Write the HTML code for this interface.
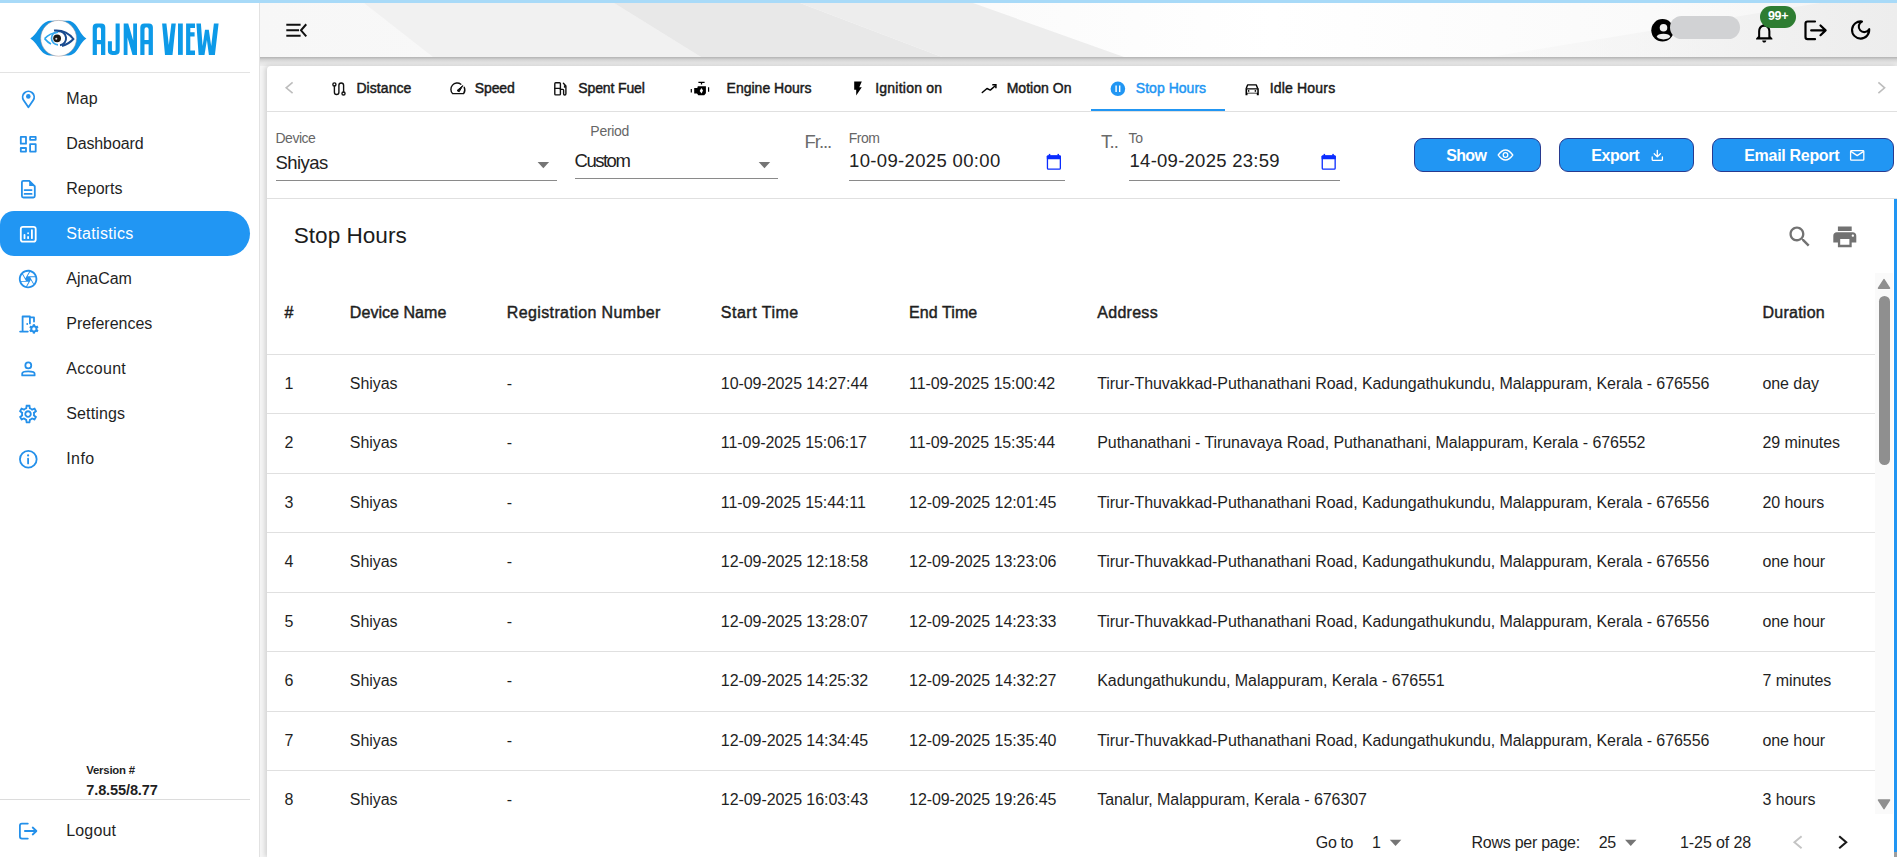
<!DOCTYPE html>
<html><head><meta charset="utf-8">
<style>
*{box-sizing:border-box;margin:0;padding:0}
html,body{width:1897px;height:857px;overflow:hidden;background:#fff;font-family:"Liberation Sans",sans-serif;color:#1f1f1f}
.a{position:absolute}
.t{position:absolute;white-space:pre}
svg{position:absolute;overflow:visible}
</style></head>
<body>
<!-- sidebar -->
<div class="a" style="left:259px;top:0;width:1px;height:857px;background:#e2e2e2"></div>
<svg style="left:0;top:0" width="240" height="70" viewBox="0 0 240 70">
  <path d="M30.3 38.6 C38 34 40 22 50 20.8 L68.6 20.8 C78 22 79 34 86.4 38.6 C79 43 78 55 68.6 55.6 L50 55.6 C40 55 38 43 30.3 38.6Z" fill="#0f93e4"/>
  <circle cx="58.6" cy="38.3" r="17.9" fill="#fff" stroke="#a89090" stroke-width="0.5"/>
  <path d="M44.6 38.6 Q50 33 58 32.3" fill="none" stroke="#2aa5ee" stroke-width="1.6"/>
  <path d="M44.6 38.6 Q48 42.5 51 44" fill="none" stroke="#2aa5ee" stroke-width="1.6"/>
  <path d="M58 31.8 A6.5 6.5 0 0 0 58 44.8" fill="none" stroke="#38a8ee" stroke-width="1.7"/>
  <path d="M54 30.6 Q66 29.5 73.4 39 Q69 44 62 46" fill="none" stroke="#1a4b8f" stroke-width="2"/>
  <path d="M58 31.3 A7 7 0 0 1 60 45.3" fill="none" stroke="#1a4b8f" stroke-width="2"/>
  <circle cx="57.1" cy="38.3" r="3.9" fill="#1a1a1a"/>
  <circle cx="56.3" cy="38.8" r="1" fill="#ddd"/>
  <g fill="#0d9ae8" fill-rule="evenodd">
    <path d="M92.7 54.9 V27.5 Q92.7 23.5 96.7 23.5 H101.3 Q105.3 23.5 105.3 27.5 V54.9 H101 V44.2 H96.9 V54.9 Z M96.9 40.1 V29.3 Q96.9 27.3 98.9 27.3 Q101 27.3 101 29.3 V40.1 Z"/>
    <path d="M115.6 23.5 H119.7 V50.5 Q119.7 54.9 115.3 54.9 H112.3 Q107.9 54.9 107.9 50.5 V41.2 H111.9 V49.5 Q111.9 51 113 51 H114.5 Q115.6 51 115.6 49.5 Z"/>
    <path d="M123.7 54.9 V23.5 H128.2 L133.2 40.5 V23.5 H137 V54.9 H132.5 L127.5 37.5 V54.9 Z"/>
    <path d="M140.3 54.9 V27.5 Q140.3 23.5 144.3 23.5 H148.9 Q152.9 23.5 152.9 27.5 V54.9 H148.6 V44.2 H144.5 V54.9 Z M144.5 40.1 V29.3 Q144.5 27.3 146.5 27.3 Q148.6 27.3 148.6 29.3 V40.1 Z"/>
    <path d="M162.1 23.5 H166.4 L168.8 45 L171.4 23.5 H175.8 L172.5 54.9 H165 Z"/>
    <path d="M178 23.5 H182.8 V54.9 H178 Z"/>
    <path d="M186.1 23.5 H195 V27.9 H190.3 V32.3 H194.6 V36.4 H190.3 V50.5 H195 V54.9 H186.1 Z"/>
    <path d="M196.4 23.5 H200.9 L202.6 46 L205 29.8 H208.8 L211.2 46 L213.9 23.5 H218.6 L214.9 54.9 H208.9 L206.9 40 L204.5 54.9 H198.6 Z"/>
  </g>
</svg>
<div class="a" style="left:0;top:72px;width:250px;height:1px;background:#e3e3e3"></div>
<div class="a" style="left:0;top:211px;width:250px;height:45px;background:#2196f3;border-radius:14px 22.5px 22.5px 14px"></div>
<svg style="left:14px;top:86px" width="30" height="26" viewBox="14 86 30 26" ><path d="M28.4 107.2 L23.6 100.2 A5.75 5.75 0 1 1 33.2 100.2 Z" fill="none" stroke="#2490ea" stroke-width="1.8" stroke-linecap="round" stroke-linejoin="round"/><circle cx="28.3" cy="96.4" r="2.3" fill="#2490ea"/></svg>
<svg style="left:14px;top:131px" width="30" height="26" viewBox="14 131 30 26" ><g fill="none" stroke="#2490ea" stroke-width="1.8" stroke-linecap="round" stroke-linejoin="round" stroke-linecap="butt" stroke-linejoin="miter"><rect x="20.8" y="136.9" width="5.2" height="6.8"/><rect x="30.1" y="136.9" width="5.6" height="2.9"/><rect x="20.8" y="148" width="5.2" height="3.6"/><rect x="30.1" y="144.2" width="5.6" height="7.4"/></g></svg>
<svg style="left:14px;top:176px" width="30" height="26" viewBox="14 176 30 26" ><path d="M29.2 180.8 H23.4 Q21.9 180.8 21.9 182.3 V196 Q21.9 197.5 23.4 197.5 H33.3 Q34.8 197.5 34.8 196 V186.4 Z" fill="none" stroke="#2490ea" stroke-width="1.8" stroke-linecap="round" stroke-linejoin="round"/><path d="M29.2 180 V186 H35.5 Z" fill="#2490ea"/><path d="M24.6 190.1 H31.6 M24.6 193.9 H31.6" fill="none" stroke="#2490ea" stroke-width="1.8" stroke-linecap="round" stroke-linejoin="round" stroke-width="1.7"/></svg>
<svg style="left:14px;top:221px" width="30" height="26" viewBox="14 221 30 26" ><rect x="20.8" y="226.8" width="14.9" height="14.8" rx="2.2" fill="none" stroke="#fff" stroke-width="1.8" stroke-linecap="round" stroke-linejoin="round"/><path d="M24.5 234.8 V238.2 M28.1 237 V238.2 M28.1 233.2 V233.3 M31.9 230.2 V238.2" fill="none" stroke="#fff" stroke-width="1.8" stroke-linecap="round" stroke-linejoin="round" stroke-width="1.7" stroke-linecap="square"/></svg>
<svg style="left:17.20px;top:268.10px" width="22.20" height="22.20" viewBox="0 0 24 24" fill="#2490ea"><path d="M14.25 2.26l-.08-.04-.01.02C13.46 2.09 12.74 2 12 2 6.48 2 2 6.48 2 12s4.48 10 10 10 10-4.48 10-10c0-4.75-3.31-8.72-7.750-9.74zM19.41 9h-7.99l2.71-4.7c2.4.66 4.35 2.42 5.28 4.7zM13.1 4.08L10.27 9l-1.15 2L6.4 6.3C7.84 4.88 9.82 4 12 4c.37 0 .74.03 1.1.08zM5.7 7.09L8.54 12l1.15 2H4.26C4.1 13.36 4 12.69 4 12c0-1.85.64-3.55 1.7-4.91zM4.59 15h7.98l-2.71 4.7c-2.4-.67-4.34-2.42-5.27-4.7zm6.31 4.91L14.89 13l2.72 4.7C16.16 19.12 14.18 20 12 20c-.38 0-.74-.04-1.1-.09zm7.4-3l-4-6.91h5.43c.17.64.27 1.31.27 2 0 1.85-.64 3.55-1.7 4.91z"/></svg>
<svg style="left:14px;top:311px" width="30" height="26" viewBox="14 311 30 26" ><path d="M20.1 331.6 H27.8 M22.6 331.6 V316.5 H29.9 V323.4 M29.9 317.4 H34 V321.5" fill="none" stroke="#2490ea" stroke-width="1.8" stroke-linecap="round" stroke-linejoin="round" stroke-width="1.7" stroke-linecap="round"/><circle cx="27.2" cy="324" r="0.9" fill="#2490ea"/><rect x="32.80" y="324.20" width="2.2" height="2.4" transform="rotate(0 33.9 328.9)" fill="#2490ea"/><rect x="32.80" y="324.20" width="2.2" height="2.4" transform="rotate(60 33.9 328.9)" fill="#2490ea"/><rect x="32.80" y="324.20" width="2.2" height="2.4" transform="rotate(120 33.9 328.9)" fill="#2490ea"/><rect x="32.80" y="324.20" width="2.2" height="2.4" transform="rotate(180 33.9 328.9)" fill="#2490ea"/><rect x="32.80" y="324.20" width="2.2" height="2.4" transform="rotate(240 33.9 328.9)" fill="#2490ea"/><rect x="32.80" y="324.20" width="2.2" height="2.4" transform="rotate(300 33.9 328.9)" fill="#2490ea"/><circle cx="33.9" cy="328.9" r="2.6" fill="none" stroke="#2490ea" stroke-width="1.9"/></svg>
<svg style="left:14px;top:356px" width="30" height="26" viewBox="14 356 30 26" ><circle cx="28.3" cy="365.4" r="2.95" fill="none" stroke="#2490ea" stroke-width="1.8" stroke-linecap="round" stroke-linejoin="round" stroke-width="1.7"/><path d="M22.2 375.4 V373.6 Q22.2 371.4 28.3 371.4 Q34.6 371.4 34.6 373.8 V375.4 Z" fill="none" stroke="#2490ea" stroke-width="1.8" stroke-linecap="round" stroke-linejoin="round" stroke-width="1.7"/></svg>
<svg style="left:17.26px;top:403.20px" width="22.10" height="22.10" viewBox="0 0 24 24" fill="#2490ea"><path d="M19.43 12.98c.04-.32.07-.64.07-.98 0-.34-.03-.66-.07-.98l2.11-1.65c.19-.15.24-.42.12-.64l-2-3.46c-.09-.16-.26-.25-.44-.25-.06 0-.12.01-.17.03l-2.49 1c-.52-.4-1.08-.73-1.69-.98l-.38-2.65C14.460 2.18 14.25 2 14 2h-4c-.25 0-.46.18-.49.42l-.38 2.65c-.61.25-1.17.59-1.69.98l-2.49-1c-.06-.02-.12-.03-.18-.03-.17 0-.34.09-.43.25l-2 3.46c-.13.22-.07.49.12.64l2.11 1.65c-.04.32-.07.65-.07.98 0 .33.03.66.07.98l-2.11 1.65c-.19.15-.24.42-.12.64l2 3.46c.09.16.26.25.44.25.06 0 .12-.01.17-.03l2.49-1c.52.4 1.08.73 1.69.98l.38 2.65c.03.24.24.42.49.42h4c.25 0 .46-.18.49-.42l.38-2.65c.61-.25 1.17-.59 1.69-.98l2.49 1c.06.02.12.03.18.03.17 0 .34-.09.43-.25l2-3.46c.12-.22.07-.49-.12-.64l-2.11-1.65zm-1.98-1.71c.04.31.05.52.05.73 0 .21-.02.43-.05.73l-.14 1.13.89.7 1.08.84-.7 1.21-1.27-.51-1.04-.42-.9.68c-.43.32-.84.56-1.25.73l-1.06.43-.16 1.13-.2 1.35h-1.4l-.19-1.35-.16-1.13-1.06-.43c-.43-.18-.83-.41-1.23-.71l-.91-.7-1.06.43-1.27.51-.7-1.21 1.08-.84.89-.7-.14-1.13c-.03-.31-.05-.54-.05-.74s.02-.43.05-.73l.14-1.13-.89-.7-1.08-.84.7-1.21 1.27.51 1.04.42.9-.68c.43-.32.84-.56 1.25-.73l1.06-.43.16-1.13.2-1.35h1.39l.19 1.35.16 1.13 1.06.43c.43.18.83.41 1.23.71l.91.7 1.06-.43 1.27-.51.7 1.21-1.07.85-.89.7.14 1.13zM12 8c-2.21 0-4 1.79-4 4s1.79 4 4 4 4-1.79 4-4-1.79-4-4-4zm0 6c-1.1 0-2-.9-2-2s.9-2 2-2 2 .9 2 2-.9 2-2 2z"/></svg>
<svg style="left:14px;top:446px" width="30" height="26" viewBox="14 446 30 26" ><circle cx="28.3" cy="459.2" r="8.35" fill="none" stroke="#2490ea" stroke-width="1.8" stroke-linecap="round" stroke-linejoin="round"/><circle cx="28.1" cy="455.4" r="1.1" fill="#2490ea"/><path d="M28.1 458.6 V463.4" fill="none" stroke="#2490ea" stroke-width="1.8" stroke-linecap="round" stroke-linejoin="round" stroke-width="2" stroke-linecap="butt"/></svg>
<svg style="left:14px;top:818px" width="30" height="26" viewBox="14 818 30 26" ><path d="M27.8 823.6 H21.9 Q19.9 823.6 19.9 825.6 V836.6 Q19.9 838.6 21.9 838.6 H27.8" fill="none" stroke="#2490ea" stroke-width="1.8" stroke-linecap="round" stroke-linejoin="round"/><path d="M24.9 831 H36.3 M32.7 827.5 L36.4 831 L32.7 834.5" fill="none" stroke="#2490ea" stroke-width="1.8" stroke-linecap="round" stroke-linejoin="round"/></svg>
<div class="a" style="left:0;top:799px;width:250px;height:1px;background:#dcdcdc"></div>

<!-- main bg -->
<div class="a" style="left:260px;top:3px;width:1637px;height:854px;background:#f5f5f5"></div>
<!-- header -->
<svg style="left:260px;top:3px" width="1637" height="54" viewBox="0 0 1637 54">
  <defs>
    <linearGradient id="hb" x1="0" y1="0" x2="1" y2="0"><stop offset="0" stop-color="#f7f7f7"/><stop offset="0.45" stop-color="#fbfbfb"/><stop offset="0.62" stop-color="#ffffff"/><stop offset="0.85" stop-color="#fafafa"/><stop offset="1" stop-color="#f3f3f3"/></linearGradient>
    <linearGradient id="hr" x1="0" y1="0" x2="1" y2="0"><stop offset="0" stop-color="#f3f3f3" stop-opacity="0.3"/><stop offset="1" stop-color="#ededed"/></linearGradient>
  </defs>
  <rect x="0" y="0" width="1637" height="54" fill="url(#hb)"/>
  <polygon points="104,0 354,0 441,54 173,54" fill="#f1f1f1"/>
  <polygon points="354,0 540,0 682,54 441,54" fill="#e8e8e8"/>
  <polygon points="540,0 713,0 864,54 682,54" fill="#ededed"/>
  <polygon points="1230,54 1560,0 1637,0 1637,54" fill="url(#hr)"/>
</svg>
<div class="a" style="left:260px;top:57px;width:1637px;height:9px;background:linear-gradient(#b3b3b3,#d4d4d4 30%,#e6e6e6 65%,#ececec)"></div>
<div class="a" style="left:0;top:0;width:1897px;height:3px;background:#a8daf8"></div>
<svg style="left:280px;top:18px" width="32" height="24" viewBox="280 18 32 24" ><g fill="none" stroke="#111" stroke-width="2.1"><path d="M286.3 24.8 H300.6 M286.3 30.3 H299 M286.3 35.8 H300.6"/><path d="M305.6 25 L301 30.3 L305.6 35.6" stroke-linecap="square" stroke-width="2"/></g></svg>
<svg style="left:1645px;top:12px" width="35" height="35" viewBox="1645 12 35 35" ><circle cx="1662.5" cy="30.3" r="11.2" fill="#000"/><circle cx="1663.5" cy="27.7" r="3.8" fill="#eee"/><ellipse cx="1663.5" cy="36.6" rx="6.6" ry="2.8" fill="#eee"/></svg>
<div class="a" style="left:1670px;top:16px;width:70px;height:23px;border-radius:11.5px;background:#d1d2d4"></div>
<svg style="left:1752.40px;top:20.30px" width="24.50" height="24.50" viewBox="0 0 24 24" fill="#000"><path d="M12 22c1.1 0 2-.9 2-2h-4c0 1.1.89 2 2 2zm6-6v-5c0-3.07-1.64-5.64-4.5-6.32V4c0-.83-.67-1.5-1.5-1.5s-1.5.67-1.5 1.5v.68C7.63 5.36 6 7.92 6 11v5l-2 2v1h16v-1l-2-2zm-2 1H8v-6c0-2.48 1.51-4.5 4-4.5s4 2.02 4 4.5v6z"/></svg>
<div class="a" style="left:1760px;top:5.6px;width:36.2px;height:22.4px;border-radius:11.2px;background:#2e7d32"></div>
<div class="t" style="left:1760px;top:9px;width:36.2px;text-align:center;font-size:12.5px;line-height:14px;font-weight:700;color:#fff;letter-spacing:-0.3px">99+</div>
<svg style="left:1800px;top:15px" width="30" height="30" viewBox="1800 15 30 30" ><g fill="none" stroke="#000" stroke-width="2.2" stroke-linecap="round" stroke-linejoin="round"><path d="M1815 21.5 H1807.6 Q1805.5 21.5 1805.5 23.6 V37.1 Q1805.5 39.2 1807.6 39.2 H1815"/><path d="M1811.2 30.4 H1825.6 M1820.5 25.5 L1825.6 30.4 L1820.5 35.2"/></g></svg>
<svg style="left:1845px;top:15px" width="30" height="30" viewBox="1845 15 30 30" ><path d="M1862 21.5 A5.56 5.56 0 1 0 1869.2 29.2 A8.6 8.6 0 1 1 1862 21.5 Z" fill="none" stroke="#000" stroke-width="2.1" stroke-linejoin="round"/></svg>

<!-- card -->
<div class="a" style="left:267px;top:66px;width:1630px;height:791px;background:#fff;border-radius:4px 0 0 0;box-shadow:-2px 0 5px rgba(0,0,0,.15)"></div>
<div class="a" style="left:267px;top:111px;width:1630px;height:1px;background:#e0e0e0"></div>
<div class="a" style="left:1091px;top:109px;width:134px;height:2px;background:#2196f3"></div>
<div class="a" style="left:267px;top:198px;width:1630px;height:1px;background:#e0e0e0"></div>
<!-- underlines -->
<div class="a" style="left:276px;top:180px;width:281px;height:1px;background:#8a8a8a"></div>
<div class="a" style="left:575px;top:178px;width:203px;height:1px;background:#8a8a8a"></div>
<div class="a" style="left:849px;top:180px;width:216px;height:1px;background:#8a8a8a"></div>
<div class="a" style="left:1129px;top:180px;width:211px;height:1px;background:#8a8a8a"></div>
<!-- buttons -->
<div class="a" style="left:1414px;top:138px;width:127px;height:34px;background:#2196f3;border:1px solid #283a8f;border-radius:9px"></div>
<div class="a" style="left:1559px;top:138px;width:135px;height:34px;background:#2196f3;border:1px solid #283a8f;border-radius:9px"></div>
<div class="a" style="left:1712px;top:138px;width:182px;height:34px;background:#2196f3;border:1px solid #283a8f;border-radius:9px"></div>
<!-- right blue strip -->
<div class="a" style="left:1894px;top:199px;width:3px;height:653px;background:#2196f3"></div>
<div class="a" style="left:1894px;top:852px;width:3px;height:5px;background:#9e9e9e"></div>
<!-- table lines -->
<div class="a" style="left:267px;top:354px;width:1608px;height:1px;background:#e0e0e0"></div>
<div class="a" style="left:267px;top:413px;width:1608px;height:1px;background:#e0e0e0"></div>
<div class="a" style="left:267px;top:473px;width:1608px;height:1px;background:#e0e0e0"></div>
<div class="a" style="left:267px;top:532px;width:1608px;height:1px;background:#e0e0e0"></div>
<div class="a" style="left:267px;top:592px;width:1608px;height:1px;background:#e0e0e0"></div>
<div class="a" style="left:267px;top:651px;width:1608px;height:1px;background:#e0e0e0"></div>
<div class="a" style="left:267px;top:711px;width:1608px;height:1px;background:#e0e0e0"></div>
<div class="a" style="left:267px;top:770px;width:1608px;height:1px;background:#e0e0e0"></div>
<!-- scrollbar -->
<div class="a" style="left:1875px;top:273px;width:18px;height:541px;background:#fafafa"></div>
<div class="a" style="left:1879px;top:296px;width:11px;height:169px;background:#8f8f8f;border-radius:6px"></div>
<svg style="left:1875px;top:273px" width="18" height="20" viewBox="0 0 18 20"><path d="M3.5 15.2 L9 6.6 L14.5 15.2Z" fill="#8f8f8f" stroke="#8f8f8f" stroke-width="1.5" stroke-linejoin="round"/></svg>
<svg style="left:1875px;top:792px" width="18" height="20" viewBox="0 0 18 20"><path d="M3.5 8 L9 16.6 L14.5 8Z" fill="#8f8f8f" stroke="#8f8f8f" stroke-width="1.5" stroke-linejoin="round"/></svg>
<svg style="left:280px;top:78px" width="20" height="20" viewBox="280 78 20 20" ><path d="M292.6 82.4 L286.2 87.8 L292.6 93.2" fill="none" stroke="#bdbdbd" stroke-width="1.6"/></svg>
<svg style="left:1870px;top:78px" width="20" height="20" viewBox="1870 78 20 20" ><path d="M1878.4 82.4 L1884.6 87.8 L1878.4 93.2" fill="none" stroke="#bdbdbd" stroke-width="1.6"/></svg>
<svg style="left:326px;top:76px" width="30" height="24" viewBox="326 76 30 24" ><circle cx="334.4" cy="84.4" r="1.55" fill="none" stroke="#111" stroke-width="1.4" stroke-linecap="round" stroke-linejoin="round"/><path d="M334.4 86 V92.3 Q334.4 94.5 336.6 94.5 Q338.9 94.5 338.9 92.3 V85.3 Q338.9 83 341.2 83 Q343.6 83 343.6 85.3 V91.9" fill="none" stroke="#111" stroke-width="1.4" stroke-linecap="round" stroke-linejoin="round"/><circle cx="343.5" cy="93.5" r="1.55" fill="none" stroke="#111" stroke-width="1.4" stroke-linecap="round" stroke-linejoin="round"/></svg>
<svg style="left:445px;top:76px" width="30" height="24" viewBox="445 76 30 24" ><path d="M460.9 84.2 A6.3 6.3 0 0 0 452.6 93.6 L463.6 93.6 A6.3 6.3 0 0 0 464.2 87.2" fill="none" stroke="#111" stroke-width="1.4" stroke-linecap="round" stroke-linejoin="round" stroke-width="1.5"/><path d="M457 90.6 L462.8 85.6 L459.2 91.8 Z" fill="#111" stroke="#111" stroke-width="1" stroke-linejoin="round"/></svg>
<svg style="left:546px;top:76px" width="30" height="24" viewBox="546 76 30 24" ><rect x="554.8" y="82.75" width="5.6" height="12.15" rx="0.9" fill="none" stroke="#111" stroke-width="1.4" stroke-linecap="round" stroke-linejoin="round" stroke-width="1.45"/><path d="M554.8 88.35 H560.4" fill="none" stroke="#111" stroke-width="1.4" stroke-linecap="round" stroke-linejoin="round" stroke-width="1.2"/><path d="M560.4 89.4 H562.9 Q563.6 89.4 563.6 90.2 V93.8 Q563.6 95 564.7 95 Q565.9 95 565.9 93.8 V86 L563.4 83.3" fill="none" stroke="#111" stroke-width="1.4" stroke-linecap="round" stroke-linejoin="round" stroke-width="1.25"/><rect x="563.9" y="85.3" width="1.8" height="2.4" fill="#111"/></svg>
<svg style="left:685px;top:76px" width="30" height="24" viewBox="685 76 30 24" ><path d="M698.4 82.4 H704.6 M701.5 82.4 V84.6" stroke="#000" stroke-width="1.3" fill="none"/><path d="M694.2 88 H697.3 L697.8 86.2 H705.9 V93.3 L704.2 95.3 H698.3 L697 93.6 H694.2 Z" fill="#000"/><path d="M691.3 88.9 V92.5 M708.6 87.2 V91.7" stroke="#000" stroke-width="1.2" fill="none"/><path d="M701.4 88 L703 90.6 L701.6 93.6 L699.7 91.1 Z" fill="#fff"/></svg>
<svg style="left:845px;top:76px" width="30" height="24" viewBox="845 76 30 24" ><path d="M854.2 81.5 H861.8 L859.3 87.2 H861.8 L856.2 95.6 V89.7 H854.2 Z" fill="#000"/></svg>
<svg style="left:975px;top:76px" width="30" height="24" viewBox="975 76 30 24" ><path d="M982.3 92.5 L987 88.5 L990.3 90.1 L995 86" fill="none" stroke="#000" stroke-width="1.5" stroke-linecap="round" stroke-linejoin="round"/><path d="M992.3 84.7 H995.9 V88.3" fill="none" stroke="#000" stroke-width="1.5" stroke-linecap="butt"/></svg>
<svg style="left:1105px;top:76px" width="30" height="24" viewBox="1105 76 30 24" ><circle cx="1117.9" cy="88.8" r="7.3" fill="#2196f3"/><path d="M1116.1 85.6 V92 M1119.7 85.6 V92" stroke="#fff" stroke-width="1.4"/></svg>
<svg style="left:1240px;top:76px" width="30" height="24" viewBox="1240 76 30 24" ><path d="M1246.2 88.6 L1247.6 84.9 H1256.3 L1257.7 88.6" fill="none" stroke="#000" stroke-width="1.4" stroke-linejoin="round"/><path d="M1245.5 88.2 H1258.8 V95.3 H1256.8 V93.6 H1247.5 V95.3 H1245.5 Z M1247 89.4 V92.8 H1257.3 V89.4 Z" fill="#000" fill-rule="evenodd"/><circle cx="1248.6" cy="90.9" r="0.85" fill="#000"/><circle cx="1255.4" cy="90.9" r="0.85" fill="#000"/></svg>
<svg style="left:535px;top:159px" width="18" height="12" viewBox="535 159 18 12" ><path d="M537.6 162 H549.1 L543.35 168.2 Z" fill="#757575"/></svg>
<svg style="left:756px;top:159px" width="18" height="12" viewBox="756 159 18 12" ><path d="M758.7 162 H770.2 L764.45 168.2 Z" fill="#757575"/></svg>
<svg style="left:1387px;top:836px" width="18" height="12" viewBox="1387 836 18 12" ><path d="M1389.8 839.8 H1401.3 L1395.55 846.0 Z" fill="#757575"/></svg>
<svg style="left:1623px;top:836px" width="18" height="12" viewBox="1623 836 18 12" ><path d="M1625 839.8 H1636.5 L1630.75 846.0 Z" fill="#757575"/></svg>
<svg style="left:1044px;top:150px" width="20" height="22" viewBox="1044 150 20 22" ><rect x="1047.45" y="156.0" width="12.9" height="13.1" rx="0.9" fill="none" stroke="#0a2cff" stroke-width="1.3"/><rect x="1046.8" y="155.4" width="14.2" height="3.9" rx="0.9" fill="#0a2cff"/><rect x="1048.8" y="153.9" width="1.5" height="2" fill="#0a2cff"/><rect x="1057.5" y="153.9" width="1.5" height="2" fill="#0a2cff"/></svg>
<svg style="left:1319px;top:150px" width="20" height="22" viewBox="1319 150 20 22" ><rect x="1322.25" y="156.0" width="12.9" height="13.1" rx="0.9" fill="none" stroke="#0a2cff" stroke-width="1.3"/><rect x="1321.6" y="155.4" width="14.2" height="3.9" rx="0.9" fill="#0a2cff"/><rect x="1323.6" y="153.9" width="1.5" height="2" fill="#0a2cff"/><rect x="1332.3" y="153.9" width="1.5" height="2" fill="#0a2cff"/></svg>
<svg style="left:1494px;top:146px" width="24" height="18" viewBox="1494 146 24 18" ><path d="M1498.2 155 Q1505.5 145 1512.8 155 Q1505.5 165 1498.2 155 Z" fill="none" stroke="#fff" stroke-width="1.3" stroke-linejoin="round"/><circle cx="1505.5" cy="155" r="2.3" fill="none" stroke="#fff" stroke-width="1.3"/></svg>
<svg style="left:1648px;top:146px" width="20" height="18" viewBox="1648 146 20 18" ><path d="M1652.2 157 V159.4 Q1652.2 160.4 1653.2 160.4 H1661.4 Q1662.4 160.4 1662.4 159.4 V157 M1654.2 153.8 L1657.3 156.9 L1660.4 153.8 M1657.3 150.3 V156.9" fill="none" stroke="#fff" stroke-width="1.3" stroke-linecap="round" stroke-linejoin="round"/></svg>
<svg style="left:1846px;top:146px" width="22" height="18" viewBox="1846 146 22 18" ><rect x="1850.6" y="150.7" width="13.2" height="9.5" rx="0.8" fill="none" stroke="#fff" stroke-width="1.3"/><path d="M1850.8 151.4 L1857.2 155.6 L1863.6 151.4" fill="none" stroke="#fff" stroke-width="1.3" stroke-linejoin="round"/></svg>
<svg style="left:1785.50px;top:223.05px" width="27.60" height="27.60" viewBox="0 0 24 24" fill="#727272"><path d="M15.5 14h-.79l-.28-.27C15.41 12.59 16 11.11 16 9.5 16 5.91 13.09 3 9.5 3S3 5.91 3 9.5 5.91 16 9.5 16c1.61 0 3.090-.59 4.23-1.57l.27.28v.79l5 4.99L20.49 19l-4.99-5zm-6 0C7.01 14 5 11.99 5 9.5S7.01 5 9.5 5 14 7.01 14 9.5 11.99 14 9.5 14z"/></svg>
<svg style="left:1830.90px;top:222.50px" width="27.60" height="27.60" viewBox="0 0 24 24" fill="#727272"><path d="M19 8H5c-1.66 0-3 1.34-3 3v6h4v4h12v-4h4v-6c0-1.66-1.34-3-3-3zm-3 11H8v-5h8v5zm3-7c-.55 0-1-.45-1-1s.45-1 1-1 1 .45 1 1-.45 1-1 1zm-1-9H6v4h12V3z"/></svg>
<svg style="left:1788px;top:832px" width="20" height="20" viewBox="1788 832 20 20" ><path d="M1801.6 836.2 L1794.4 842.2 L1801.6 848.2" fill="none" stroke="#c4c4c4" stroke-width="1.9"/></svg>
<svg style="left:1834px;top:832px" width="20" height="20" viewBox="1834 832 20 20" ><path d="M1839.2 836.2 L1846.2 842.2 L1839.2 848.2" fill="none" stroke="#1a1a1a" stroke-width="2.1"/></svg>
<div class="t" style="left:66.25px;top:90.86px;font-size:16px;line-height:16px;font-weight:400;color:#1f1f1f;letter-spacing:0.192px">Map</div>
<div class="t" style="left:66.25px;top:135.86px;font-size:16px;line-height:16px;font-weight:400;color:#1f1f1f;letter-spacing:-0.120px">Dashboard</div>
<div class="t" style="left:66.25px;top:180.86px;font-size:16px;line-height:16px;font-weight:400;color:#1f1f1f;letter-spacing:0.024px">Reports</div>
<div class="t" style="left:66.25px;top:225.86px;font-size:16px;line-height:16px;font-weight:400;color:#fff;letter-spacing:0.328px">Statistics</div>
<div class="t" style="left:66.25px;top:270.86px;font-size:16px;line-height:16px;font-weight:400;color:#1f1f1f;letter-spacing:-0.030px">AjnaCam</div>
<div class="t" style="left:66.25px;top:315.86px;font-size:16px;line-height:16px;font-weight:400;color:#1f1f1f;letter-spacing:-0.024px">Preferences</div>
<div class="t" style="left:66.25px;top:360.86px;font-size:16px;line-height:16px;font-weight:400;color:#1f1f1f;letter-spacing:0.284px">Account</div>
<div class="t" style="left:66.25px;top:405.86px;font-size:16px;line-height:16px;font-weight:400;color:#1f1f1f;letter-spacing:0.136px">Settings</div>
<div class="t" style="left:66.25px;top:450.86px;font-size:16px;line-height:16px;font-weight:400;color:#1f1f1f;letter-spacing:0.403px">Info</div>
<div class="t" style="left:66.25px;top:823.16px;font-size:16px;line-height:16px;font-weight:400;color:#1f1f1f;letter-spacing:0.160px">Logout</div>
<div class="t" style="left:86.25px;top:765.25px;font-size:11.4px;line-height:11.4px;font-weight:700;color:#1f1f1f;letter-spacing:-0.228px">Version #</div>
<div class="t" style="left:86.25px;top:782.64px;font-size:14.6px;line-height:14.6px;font-weight:700;color:#1f1f1f;letter-spacing:-0.141px">7.8.55/8.77</div>
<div class="t" style="left:356.45px;top:81.45px;font-size:14px;line-height:14px;font-weight:400;color:#1a1a1a;letter-spacing:0.066px;-webkit-text-stroke:0.45px #1a1a1a">Distance</div>
<div class="t" style="left:474.85px;top:81.45px;font-size:14px;line-height:14px;font-weight:400;color:#1a1a1a;letter-spacing:-0.137px;-webkit-text-stroke:0.45px #1a1a1a">Speed</div>
<div class="t" style="left:578.25px;top:81.45px;font-size:14px;line-height:14px;font-weight:400;color:#1a1a1a;letter-spacing:-0.122px;-webkit-text-stroke:0.45px #1a1a1a">Spent Fuel</div>
<div class="t" style="left:726.55px;top:81.45px;font-size:14px;line-height:14px;font-weight:400;color:#1a1a1a;letter-spacing:0.006px;-webkit-text-stroke:0.45px #1a1a1a">Engine Hours</div>
<div class="t" style="left:875.15px;top:81.45px;font-size:14px;line-height:14px;font-weight:400;color:#1a1a1a;letter-spacing:0.236px;-webkit-text-stroke:0.45px #1a1a1a">Ignition on</div>
<div class="t" style="left:1006.65px;top:81.45px;font-size:14px;line-height:14px;font-weight:400;color:#1a1a1a;letter-spacing:0.034px;-webkit-text-stroke:0.45px #1a1a1a">Motion On</div>
<div class="t" style="left:1135.85px;top:81.45px;font-size:14px;line-height:14px;font-weight:400;color:#2196f3;letter-spacing:0.025px;-webkit-text-stroke:0.45px #2196f3">Stop Hours</div>
<div class="t" style="left:1269.65px;top:81.45px;font-size:14px;line-height:14px;font-weight:400;color:#1a1a1a;letter-spacing:0.189px;-webkit-text-stroke:0.45px #1a1a1a">Idle Hours</div>
<div class="t" style="left:275.45px;top:131.05px;font-size:14px;line-height:14px;font-weight:400;color:#666;letter-spacing:-0.466px">Device</div>
<div class="t" style="left:275.45px;top:153.84px;font-size:18.5px;line-height:18.5px;font-weight:400;color:#222;letter-spacing:-0.555px">Shiyas</div>
<div class="t" style="left:590.35px;top:123.95px;font-size:14px;line-height:14px;font-weight:400;color:#666;letter-spacing:-0.295px">Period</div>
<div class="t" style="left:574.55px;top:151.94px;font-size:18.5px;line-height:18.5px;font-weight:400;color:#222;letter-spacing:-1.492px">Custom</div>
<div class="t" style="left:804.55px;top:132.94px;font-size:18.5px;line-height:18.5px;font-weight:400;color:#6b6b6b;letter-spacing:-1.055px">Fr...</div>
<div class="t" style="left:848.75px;top:131.05px;font-size:14px;line-height:14px;font-weight:400;color:#666;letter-spacing:-0.468px">From</div>
<div class="t" style="left:849.05px;top:151.94px;font-size:18.5px;line-height:18.5px;font-weight:400;color:#222;letter-spacing:0.339px">10-09-2025 00:00</div>
<div class="t" style="left:1100.95px;top:132.94px;font-size:18.5px;line-height:18.5px;font-weight:400;color:#6b6b6b;letter-spacing:-0.744px">T..</div>
<div class="t" style="left:1128.45px;top:131.05px;font-size:14px;line-height:14px;font-weight:400;color:#666;letter-spacing:-0.098px">To</div>
<div class="t" style="left:1129.55px;top:151.94px;font-size:18.5px;line-height:18.5px;font-weight:400;color:#222;letter-spacing:0.258px">14-09-2025 23:59</div>
<div class="t" style="left:1446.25px;top:147.76px;font-size:16px;line-height:16px;font-weight:700;color:#fff;letter-spacing:-0.668px">Show</div>
<div class="t" style="left:1591.25px;top:147.76px;font-size:16px;line-height:16px;font-weight:700;color:#fff;letter-spacing:-0.445px">Export</div>
<div class="t" style="left:1744.25px;top:147.76px;font-size:16px;line-height:16px;font-weight:700;color:#fff;letter-spacing:-0.307px">Email Report</div>
<div class="t" style="left:293.75px;top:225.47px;font-size:22.6px;line-height:22.6px;font-weight:400;color:#1c1c1c;letter-spacing:-0.003px">Stop Hours</div>
<div class="t" style="left:284.55px;top:304.86px;font-size:16px;line-height:16px;font-weight:400;color:#1f1f1f;letter-spacing:0.294px;-webkit-text-stroke:0.45px #1f1f1f">#</div>
<div class="t" style="left:349.85px;top:304.86px;font-size:16px;line-height:16px;font-weight:400;color:#1f1f1f;letter-spacing:0.043px;-webkit-text-stroke:0.45px #1f1f1f">Device Name</div>
<div class="t" style="left:506.75px;top:304.86px;font-size:16px;line-height:16px;font-weight:400;color:#1f1f1f;letter-spacing:0.382px;-webkit-text-stroke:0.45px #1f1f1f">Registration Number</div>
<div class="t" style="left:720.85px;top:304.86px;font-size:16px;line-height:16px;font-weight:400;color:#1f1f1f;letter-spacing:0.489px;-webkit-text-stroke:0.45px #1f1f1f">Start Time</div>
<div class="t" style="left:909.05px;top:304.86px;font-size:16px;line-height:16px;font-weight:400;color:#1f1f1f;letter-spacing:0.088px;-webkit-text-stroke:0.45px #1f1f1f">End Time</div>
<div class="t" style="left:1097.25px;top:304.86px;font-size:16px;line-height:16px;font-weight:400;color:#1f1f1f;letter-spacing:0.285px;-webkit-text-stroke:0.45px #1f1f1f">Address</div>
<div class="t" style="left:1762.45px;top:304.86px;font-size:16px;line-height:16px;font-weight:400;color:#1f1f1f;letter-spacing:0.252px;-webkit-text-stroke:0.45px #1f1f1f">Duration</div>
<div class="t" style="left:284.55px;top:376.06px;font-size:16px;line-height:16px;font-weight:400;color:#1f1f1f;letter-spacing:-0.070px">1</div>
<div class="t" style="left:349.85px;top:376.06px;font-size:16px;line-height:16px;font-weight:400;color:#1f1f1f;letter-spacing:-0.070px">Shiyas</div>
<div class="t" style="left:506.75px;top:376.06px;font-size:16px;line-height:16px;font-weight:400;color:#1f1f1f;letter-spacing:-0.070px">-</div>
<div class="t" style="left:720.85px;top:376.06px;font-size:16px;line-height:16px;font-weight:400;color:#1f1f1f;letter-spacing:-0.070px">10-09-2025 14:27:44</div>
<div class="t" style="left:909.05px;top:376.06px;font-size:16px;line-height:16px;font-weight:400;color:#1f1f1f;letter-spacing:-0.070px">11-09-2025 15:00:42</div>
<div class="t" style="left:1097.25px;top:376.06px;font-size:16px;line-height:16px;font-weight:400;color:#1f1f1f;letter-spacing:-0.070px">Tirur-Thuvakkad-Puthanathani Road, Kadungathukundu, Malappuram, Kerala - 676556</div>
<div class="t" style="left:1762.45px;top:376.06px;font-size:16px;line-height:16px;font-weight:400;color:#1f1f1f;letter-spacing:-0.070px">one day</div>
<div class="t" style="left:284.55px;top:435.49px;font-size:16px;line-height:16px;font-weight:400;color:#1f1f1f;letter-spacing:-0.070px">2</div>
<div class="t" style="left:349.85px;top:435.49px;font-size:16px;line-height:16px;font-weight:400;color:#1f1f1f;letter-spacing:-0.070px">Shiyas</div>
<div class="t" style="left:506.75px;top:435.49px;font-size:16px;line-height:16px;font-weight:400;color:#1f1f1f;letter-spacing:-0.070px">-</div>
<div class="t" style="left:720.85px;top:435.49px;font-size:16px;line-height:16px;font-weight:400;color:#1f1f1f;letter-spacing:-0.070px">11-09-2025 15:06:17</div>
<div class="t" style="left:909.05px;top:435.49px;font-size:16px;line-height:16px;font-weight:400;color:#1f1f1f;letter-spacing:-0.070px">11-09-2025 15:35:44</div>
<div class="t" style="left:1097.25px;top:435.49px;font-size:16px;line-height:16px;font-weight:400;color:#1f1f1f;letter-spacing:-0.070px">Puthanathani - Tirunavaya Road, Puthanathani, Malappuram, Kerala - 676552</div>
<div class="t" style="left:1762.45px;top:435.49px;font-size:16px;line-height:16px;font-weight:400;color:#1f1f1f;letter-spacing:-0.070px">29 minutes</div>
<div class="t" style="left:284.55px;top:494.92px;font-size:16px;line-height:16px;font-weight:400;color:#1f1f1f;letter-spacing:-0.070px">3</div>
<div class="t" style="left:349.85px;top:494.92px;font-size:16px;line-height:16px;font-weight:400;color:#1f1f1f;letter-spacing:-0.070px">Shiyas</div>
<div class="t" style="left:506.75px;top:494.92px;font-size:16px;line-height:16px;font-weight:400;color:#1f1f1f;letter-spacing:-0.070px">-</div>
<div class="t" style="left:720.85px;top:494.92px;font-size:16px;line-height:16px;font-weight:400;color:#1f1f1f;letter-spacing:-0.070px">11-09-2025 15:44:11</div>
<div class="t" style="left:909.05px;top:494.92px;font-size:16px;line-height:16px;font-weight:400;color:#1f1f1f;letter-spacing:-0.070px">12-09-2025 12:01:45</div>
<div class="t" style="left:1097.25px;top:494.92px;font-size:16px;line-height:16px;font-weight:400;color:#1f1f1f;letter-spacing:-0.070px">Tirur-Thuvakkad-Puthanathani Road, Kadungathukundu, Malappuram, Kerala - 676556</div>
<div class="t" style="left:1762.45px;top:494.92px;font-size:16px;line-height:16px;font-weight:400;color:#1f1f1f;letter-spacing:-0.070px">20 hours</div>
<div class="t" style="left:284.55px;top:554.35px;font-size:16px;line-height:16px;font-weight:400;color:#1f1f1f;letter-spacing:-0.070px">4</div>
<div class="t" style="left:349.85px;top:554.35px;font-size:16px;line-height:16px;font-weight:400;color:#1f1f1f;letter-spacing:-0.070px">Shiyas</div>
<div class="t" style="left:506.75px;top:554.35px;font-size:16px;line-height:16px;font-weight:400;color:#1f1f1f;letter-spacing:-0.070px">-</div>
<div class="t" style="left:720.85px;top:554.35px;font-size:16px;line-height:16px;font-weight:400;color:#1f1f1f;letter-spacing:-0.070px">12-09-2025 12:18:58</div>
<div class="t" style="left:909.05px;top:554.35px;font-size:16px;line-height:16px;font-weight:400;color:#1f1f1f;letter-spacing:-0.070px">12-09-2025 13:23:06</div>
<div class="t" style="left:1097.25px;top:554.35px;font-size:16px;line-height:16px;font-weight:400;color:#1f1f1f;letter-spacing:-0.070px">Tirur-Thuvakkad-Puthanathani Road, Kadungathukundu, Malappuram, Kerala - 676556</div>
<div class="t" style="left:1762.45px;top:554.35px;font-size:16px;line-height:16px;font-weight:400;color:#1f1f1f;letter-spacing:-0.070px">one hour</div>
<div class="t" style="left:284.55px;top:613.78px;font-size:16px;line-height:16px;font-weight:400;color:#1f1f1f;letter-spacing:-0.070px">5</div>
<div class="t" style="left:349.85px;top:613.78px;font-size:16px;line-height:16px;font-weight:400;color:#1f1f1f;letter-spacing:-0.070px">Shiyas</div>
<div class="t" style="left:506.75px;top:613.78px;font-size:16px;line-height:16px;font-weight:400;color:#1f1f1f;letter-spacing:-0.070px">-</div>
<div class="t" style="left:720.85px;top:613.78px;font-size:16px;line-height:16px;font-weight:400;color:#1f1f1f;letter-spacing:-0.070px">12-09-2025 13:28:07</div>
<div class="t" style="left:909.05px;top:613.78px;font-size:16px;line-height:16px;font-weight:400;color:#1f1f1f;letter-spacing:-0.070px">12-09-2025 14:23:33</div>
<div class="t" style="left:1097.25px;top:613.78px;font-size:16px;line-height:16px;font-weight:400;color:#1f1f1f;letter-spacing:-0.070px">Tirur-Thuvakkad-Puthanathani Road, Kadungathukundu, Malappuram, Kerala - 676556</div>
<div class="t" style="left:1762.45px;top:613.78px;font-size:16px;line-height:16px;font-weight:400;color:#1f1f1f;letter-spacing:-0.070px">one hour</div>
<div class="t" style="left:284.55px;top:673.21px;font-size:16px;line-height:16px;font-weight:400;color:#1f1f1f;letter-spacing:-0.070px">6</div>
<div class="t" style="left:349.85px;top:673.21px;font-size:16px;line-height:16px;font-weight:400;color:#1f1f1f;letter-spacing:-0.070px">Shiyas</div>
<div class="t" style="left:506.75px;top:673.21px;font-size:16px;line-height:16px;font-weight:400;color:#1f1f1f;letter-spacing:-0.070px">-</div>
<div class="t" style="left:720.85px;top:673.21px;font-size:16px;line-height:16px;font-weight:400;color:#1f1f1f;letter-spacing:-0.070px">12-09-2025 14:25:32</div>
<div class="t" style="left:909.05px;top:673.21px;font-size:16px;line-height:16px;font-weight:400;color:#1f1f1f;letter-spacing:-0.070px">12-09-2025 14:32:27</div>
<div class="t" style="left:1097.25px;top:673.21px;font-size:16px;line-height:16px;font-weight:400;color:#1f1f1f;letter-spacing:-0.070px">Kadungathukundu, Malappuram, Kerala - 676551</div>
<div class="t" style="left:1762.45px;top:673.21px;font-size:16px;line-height:16px;font-weight:400;color:#1f1f1f;letter-spacing:-0.070px">7 minutes</div>
<div class="t" style="left:284.55px;top:732.64px;font-size:16px;line-height:16px;font-weight:400;color:#1f1f1f;letter-spacing:-0.070px">7</div>
<div class="t" style="left:349.85px;top:732.64px;font-size:16px;line-height:16px;font-weight:400;color:#1f1f1f;letter-spacing:-0.070px">Shiyas</div>
<div class="t" style="left:506.75px;top:732.64px;font-size:16px;line-height:16px;font-weight:400;color:#1f1f1f;letter-spacing:-0.070px">-</div>
<div class="t" style="left:720.85px;top:732.64px;font-size:16px;line-height:16px;font-weight:400;color:#1f1f1f;letter-spacing:-0.070px">12-09-2025 14:34:45</div>
<div class="t" style="left:909.05px;top:732.64px;font-size:16px;line-height:16px;font-weight:400;color:#1f1f1f;letter-spacing:-0.070px">12-09-2025 15:35:40</div>
<div class="t" style="left:1097.25px;top:732.64px;font-size:16px;line-height:16px;font-weight:400;color:#1f1f1f;letter-spacing:-0.070px">Tirur-Thuvakkad-Puthanathani Road, Kadungathukundu, Malappuram, Kerala - 676556</div>
<div class="t" style="left:1762.45px;top:732.64px;font-size:16px;line-height:16px;font-weight:400;color:#1f1f1f;letter-spacing:-0.070px">one hour</div>
<div class="t" style="left:284.55px;top:792.07px;font-size:16px;line-height:16px;font-weight:400;color:#1f1f1f;letter-spacing:-0.070px">8</div>
<div class="t" style="left:349.85px;top:792.07px;font-size:16px;line-height:16px;font-weight:400;color:#1f1f1f;letter-spacing:-0.070px">Shiyas</div>
<div class="t" style="left:506.75px;top:792.07px;font-size:16px;line-height:16px;font-weight:400;color:#1f1f1f;letter-spacing:-0.070px">-</div>
<div class="t" style="left:720.85px;top:792.07px;font-size:16px;line-height:16px;font-weight:400;color:#1f1f1f;letter-spacing:-0.070px">12-09-2025 16:03:43</div>
<div class="t" style="left:909.05px;top:792.07px;font-size:16px;line-height:16px;font-weight:400;color:#1f1f1f;letter-spacing:-0.070px">12-09-2025 19:26:45</div>
<div class="t" style="left:1097.25px;top:792.07px;font-size:16px;line-height:16px;font-weight:400;color:#1f1f1f;letter-spacing:-0.070px">Tanalur, Malappuram, Kerala - 676307</div>
<div class="t" style="left:1762.45px;top:792.07px;font-size:16px;line-height:16px;font-weight:400;color:#1f1f1f;letter-spacing:-0.070px">3 hours</div>
<div class="t" style="left:1315.85px;top:835.36px;font-size:16px;line-height:16px;font-weight:400;color:#1f1f1f;letter-spacing:-0.388px">Go to</div>
<div class="t" style="left:1371.95px;top:834.96px;font-size:16px;line-height:16px;font-weight:400;color:#1f1f1f;letter-spacing:0.000px">1</div>
<div class="t" style="left:1471.55px;top:835.36px;font-size:16px;line-height:16px;font-weight:400;color:#1f1f1f;letter-spacing:-0.269px">Rows per page:</div>
<div class="t" style="left:1598.65px;top:834.96px;font-size:16px;line-height:16px;font-weight:400;color:#1f1f1f;letter-spacing:-0.198px">25</div>
<div class="t" style="left:1680.05px;top:835.36px;font-size:16px;line-height:16px;font-weight:400;color:#1f1f1f;letter-spacing:-0.096px">1-25 of 28</div>
</body></html>
